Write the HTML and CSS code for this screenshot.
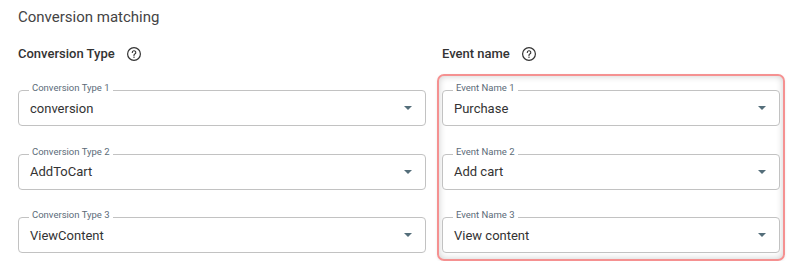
FILE: index.html
```html
<!DOCTYPE html>
<html lang="en">
<head>
<meta charset="utf-8">
<title>Conversion matching</title>
<link rel="stylesheet" href="styles.css">
</head>
<body>
<div class="page">
  <h2 class="title">Conversion matching</h2>
  <div class="columns">
    <section class="col">
      <div class="col-head">
        <span class="col-title">Conversion Type</span>
        <svg class="help" viewBox="0 0 16 16" width="16" height="16" aria-hidden="true"><circle cx="8" cy="8" r="6.4" fill="none" stroke="#333" stroke-width="1.2"/><path d="M6.3 6.5a1.75 1.75 0 1 1 2.5 1.6c-.55.3-.8.6-.8 1.2v.3" fill="none" stroke="#333" stroke-width="1.15" stroke-linecap="round"/><circle cx="8" cy="11.2" r=".7" fill="#333"/></svg>
      </div>
      <div class="fields">
        <div class="field"><span class="label">Conversion Type 1</span><span class="value">conversion</span><span class="arrow"></span></div>
        <div class="field"><span class="label">Conversion Type 2</span><span class="value">AddToCart</span><span class="arrow"></span></div>
        <div class="field"><span class="label">Conversion Type 3</span><span class="value">ViewContent</span><span class="arrow"></span></div>
      </div>
    </section>
    <section class="col">
      <div class="col-head">
        <span class="col-title">Event name</span>
        <svg class="help help-wide" viewBox="0 0 16 16" width="16" height="16" aria-hidden="true"><circle cx="8" cy="8" r="6.4" fill="none" stroke="#333" stroke-width="1.2"/><path d="M6.3 6.5a1.75 1.75 0 1 1 2.5 1.6c-.55.3-.8.6-.8 1.2v.3" fill="none" stroke="#333" stroke-width="1.15" stroke-linecap="round"/><circle cx="8" cy="11.2" r=".7" fill="#333"/></svg>
      </div>
      <div class="fields highlight">
        <div class="field"><span class="label">Event Name 1</span><span class="value">Purchase</span><span class="arrow"></span></div>
        <div class="field"><span class="label">Event Name 2</span><span class="value">Add cart</span><span class="arrow"></span></div>
        <div class="field"><span class="label">Event Name 3</span><span class="value">View content</span><span class="arrow"></span></div>
      </div>
    </section>
  </div>
</div>
</body>
</html>
```

FILE: styles.css
```css
* { box-sizing: border-box; }
html, body { margin: 0; background: #fff; }
body {
  font-family: Roboto, "Liberation Sans", Arial, sans-serif;
  color: #333;
}
.page {
  padding: 7px 18px 0;
}
.title {
  margin: 0;
  font-size: 15px;
  line-height: 20px;
  font-weight: 400;
  color: #444;
}
.columns {
  display: grid;
  grid-template-columns: 408px 338px;
  column-gap: 16px;
  align-items: start;
  margin-top: 19px;
}
.col {
  display: block;
}
.col-head {
  display: flex;
  align-items: center;
  height: 16px;
}
.col-title {
  font-size: 13px;
  line-height: 16px;
  font-weight: 500;
  color: #333;
}
.help {
  margin-left: 11px;
  flex: none;
}
.help-wide {
  margin-left: 11px;
}
.fields {
  display: flex;
  flex-direction: column;
  gap: 27.5px;
  margin-top: 28px;
}
.highlight {
  margin: 12px -5px 0;
  padding: 14px 3px 6px;
  border: 2px solid #f59191;
  border-radius: 7px;
  box-shadow: inset 0 0 7px rgba(0, 0, 0, 0.2), 0 1px 3px rgba(0, 0, 0, 0.08);
}
.field {
  position: relative;
  display: flex;
  align-items: center;
  height: 36px;
  flex: none;
  padding: 0 13px 0 11px;
  border: 1px solid #c2c2c2;
  border-radius: 4px;
  background: #fff;
}
.label {
  position: absolute;
  top: -9px;
  left: 10px;
  padding: 0 3px;
  background: #fff;
  font-size: 9.5px;
  line-height: 12px;
  color: #5b6b78;
  white-space: nowrap;
}
.value {
  font-size: 13px;
  line-height: 16px;
  color: #333;
  padding-top: 1px;
}
.arrow {
  margin-left: auto;
  width: 0;
  height: 0;
  border-left: 4px solid transparent;
  border-right: 4px solid transparent;
  border-top: 4px solid #546e7a;
}
```
